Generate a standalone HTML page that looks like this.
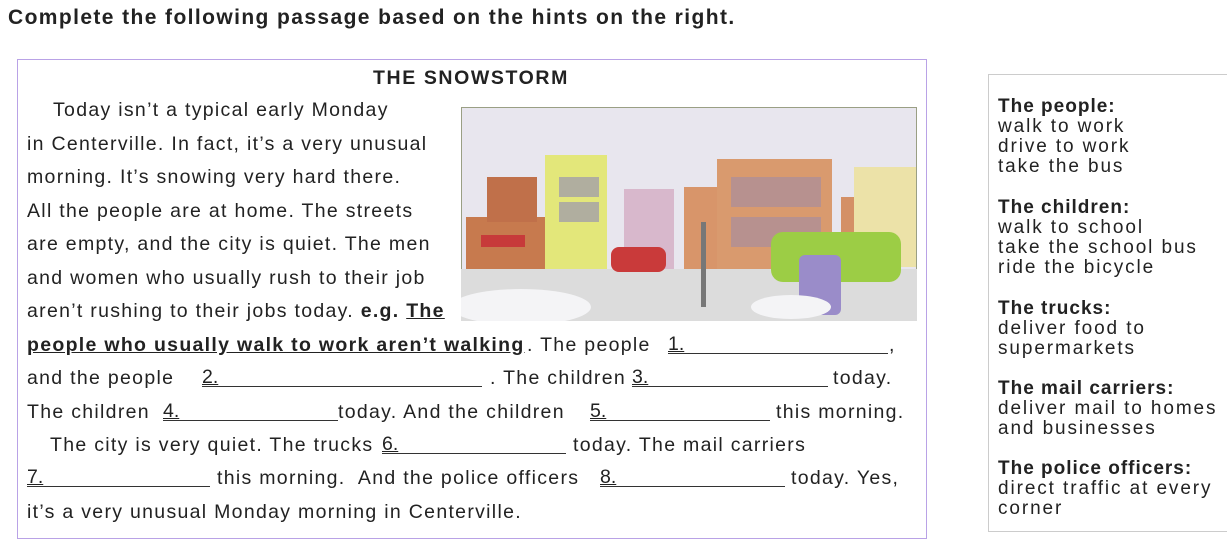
<!DOCTYPE html>
<html><head><meta charset="utf-8"><style>
body{margin:0;width:1227px;height:550px;background:#fff;position:relative;overflow:hidden;font-family:"Liberation Sans",sans-serif;color:#222}
.a{position:absolute;white-space:nowrap;font-size:19.5px;line-height:24px;letter-spacing:1.3px}
.b{position:absolute;border-bottom:1px solid #333;height:20px;font-size:19.5px;line-height:22px;text-decoration:underline}
.h{position:absolute;left:998px;font-size:19px;line-height:20px;color:#222;letter-spacing:1.9px;white-space:nowrap}
.h b{letter-spacing:1px}
</style></head><body>
<div class="a" style="left:8px;top:6px;font-weight:bold;font-size:21px;letter-spacing:1.4px">Complete the following passage based on the hints on the right.</div>
<div style="position:absolute;left:17px;top:59px;width:908px;height:478px;border:1px solid #b9a2e6;"></div>
<div class="a" style="left:373px;top:66px;font-weight:bold;letter-spacing:1.6px">THE SNOWSTORM</div>

<svg style="position:absolute;left:461px;top:107px" width="456" height="214" viewBox="0 0 456 214">
<rect x="0" y="0" width="456" height="214" fill="#e8e6ee" stroke="#9a9f84" stroke-width="2"/>
<rect x="5" y="110" width="80" height="55" fill="#c77a4e"/>
<rect x="26" y="70" width="50" height="45" fill="#c0704a"/>
<rect x="84" y="48" width="62" height="115" fill="#e3e77a"/>
<rect x="163" y="82" width="50" height="80" fill="#d8b8cc"/>
<rect x="223" y="80" width="40" height="82" fill="#d8956a"/>
<rect x="256" y="52" width="115" height="110" fill="#d99a6e"/>
<rect x="380" y="90" width="30" height="70" fill="#d49066"/>
<rect x="393" y="60" width="62" height="100" fill="#ece2a8"/>
<rect x="20" y="128" width="44" height="12" fill="#c73a3a"/>
<rect x="98" y="70" width="40" height="20" fill="#8d88b8" opacity=".6"/>
<rect x="98" y="95" width="40" height="20" fill="#8d88b8" opacity=".6"/>
<rect x="270" y="70" width="90" height="30" fill="#8d88b8" opacity=".45"/>
<rect x="270" y="110" width="90" height="30" fill="#8d88b8" opacity=".45"/>
<rect x="0" y="162" width="456" height="52" fill="#dcdcdc"/>
<rect x="150" y="140" width="55" height="25" rx="8" fill="#c93a3a"/>
<rect x="310" y="125" width="130" height="50" rx="12" fill="#9ccd45"/>
<rect x="338" y="148" width="42" height="60" rx="6" fill="#9a8cc9"/>
<rect x="240" y="115" width="5" height="85" fill="#777"/>
<ellipse cx="60" cy="200" rx="70" ry="18" fill="#f4f4f6"/>
<ellipse cx="330" cy="200" rx="40" ry="12" fill="#f4f4f6"/>
</svg>

<div class="a" style="left:53px;top:98px">Today isn’t a typical early Monday</div>
<div class="a" style="left:27px;top:132px">in Centerville. In fact, it’s a very unusual</div>
<div class="a" style="left:27px;top:165px">morning. It’s snowing very hard there.</div>
<div class="a" style="left:27px;top:199px">All the people are at home. The streets</div>
<div class="a" style="left:27px;top:232px">are empty, and the city is quiet. The men</div>
<div class="a" style="left:27px;top:266px">and women who usually rush to their job</div>
<div class="a" style="left:27px;top:299px">aren’t rushing to their jobs today. <b>e.g. <u>The</u></b></div>
<div class="a" style="left:27px;top:333px;font-weight:bold;text-decoration:underline">people who usually walk to work aren’t walking </div>
<div class="a" style="left:527px;top:333px">. The people</div>
<div class="b" style="left:668px;top:333px;width:220px">1.</div><div class="a" style="left:889px;top:333px">,</div>
<div class="a" style="left:27px;top:366px">and the people</div>
<div class="b" style="left:202px;top:366px;width:280px">2.</div>
<div class="a" style="left:490px;top:366px">. The children</div>
<div class="b" style="left:632px;top:366px;width:196px">3.</div>
<div class="a" style="left:833px;top:366px">today.</div>
<div class="a" style="left:27px;top:400px">The children</div>
<div class="b" style="left:163px;top:400px;width:175px">4.</div>
<div class="a" style="left:338px;top:400px">today. And the children</div>
<div class="b" style="left:590px;top:400px;width:180px">5.</div>
<div class="a" style="left:776px;top:400px">this morning.</div>
<div class="a" style="left:50px;top:433px">The city is very quiet. The trucks</div>
<div class="b" style="left:382px;top:433px;width:184px">6.</div>
<div class="a" style="left:573px;top:433px">today. The mail carriers</div>
<div class="b" style="left:27px;top:466px;width:183px">7.</div>
<div class="a" style="left:217px;top:466px">this morning.&nbsp; And the police officers</div>
<div class="b" style="left:600px;top:466px;width:185px">8.</div>
<div class="a" style="left:791px;top:466px">today. Yes,</div>
<div class="a" style="left:27px;top:500px">it’s a very unusual Monday morning in Centerville.</div>

<div style="position:absolute;left:988px;top:74px;width:245px;height:456px;border:1px solid #ccc;"></div>
<div class="h" style="top:97px"><b>The people:</b><br>walk to work<br>drive to work<br>take the bus</div>
<div class="h" style="top:198px"><b>The children:</b><br>walk to school<br>take the school bus<br>ride the bicycle</div>
<div class="h" style="top:299px"><b>The trucks:</b><br>deliver food to<br>supermarkets</div>
<div class="h" style="top:379px"><b>The mail carriers:</b><br>deliver mail to homes<br>and businesses</div>
<div class="h" style="top:459px"><b>The police officers:</b><br>direct traffic at every<br>corner</div>
</body></html>
